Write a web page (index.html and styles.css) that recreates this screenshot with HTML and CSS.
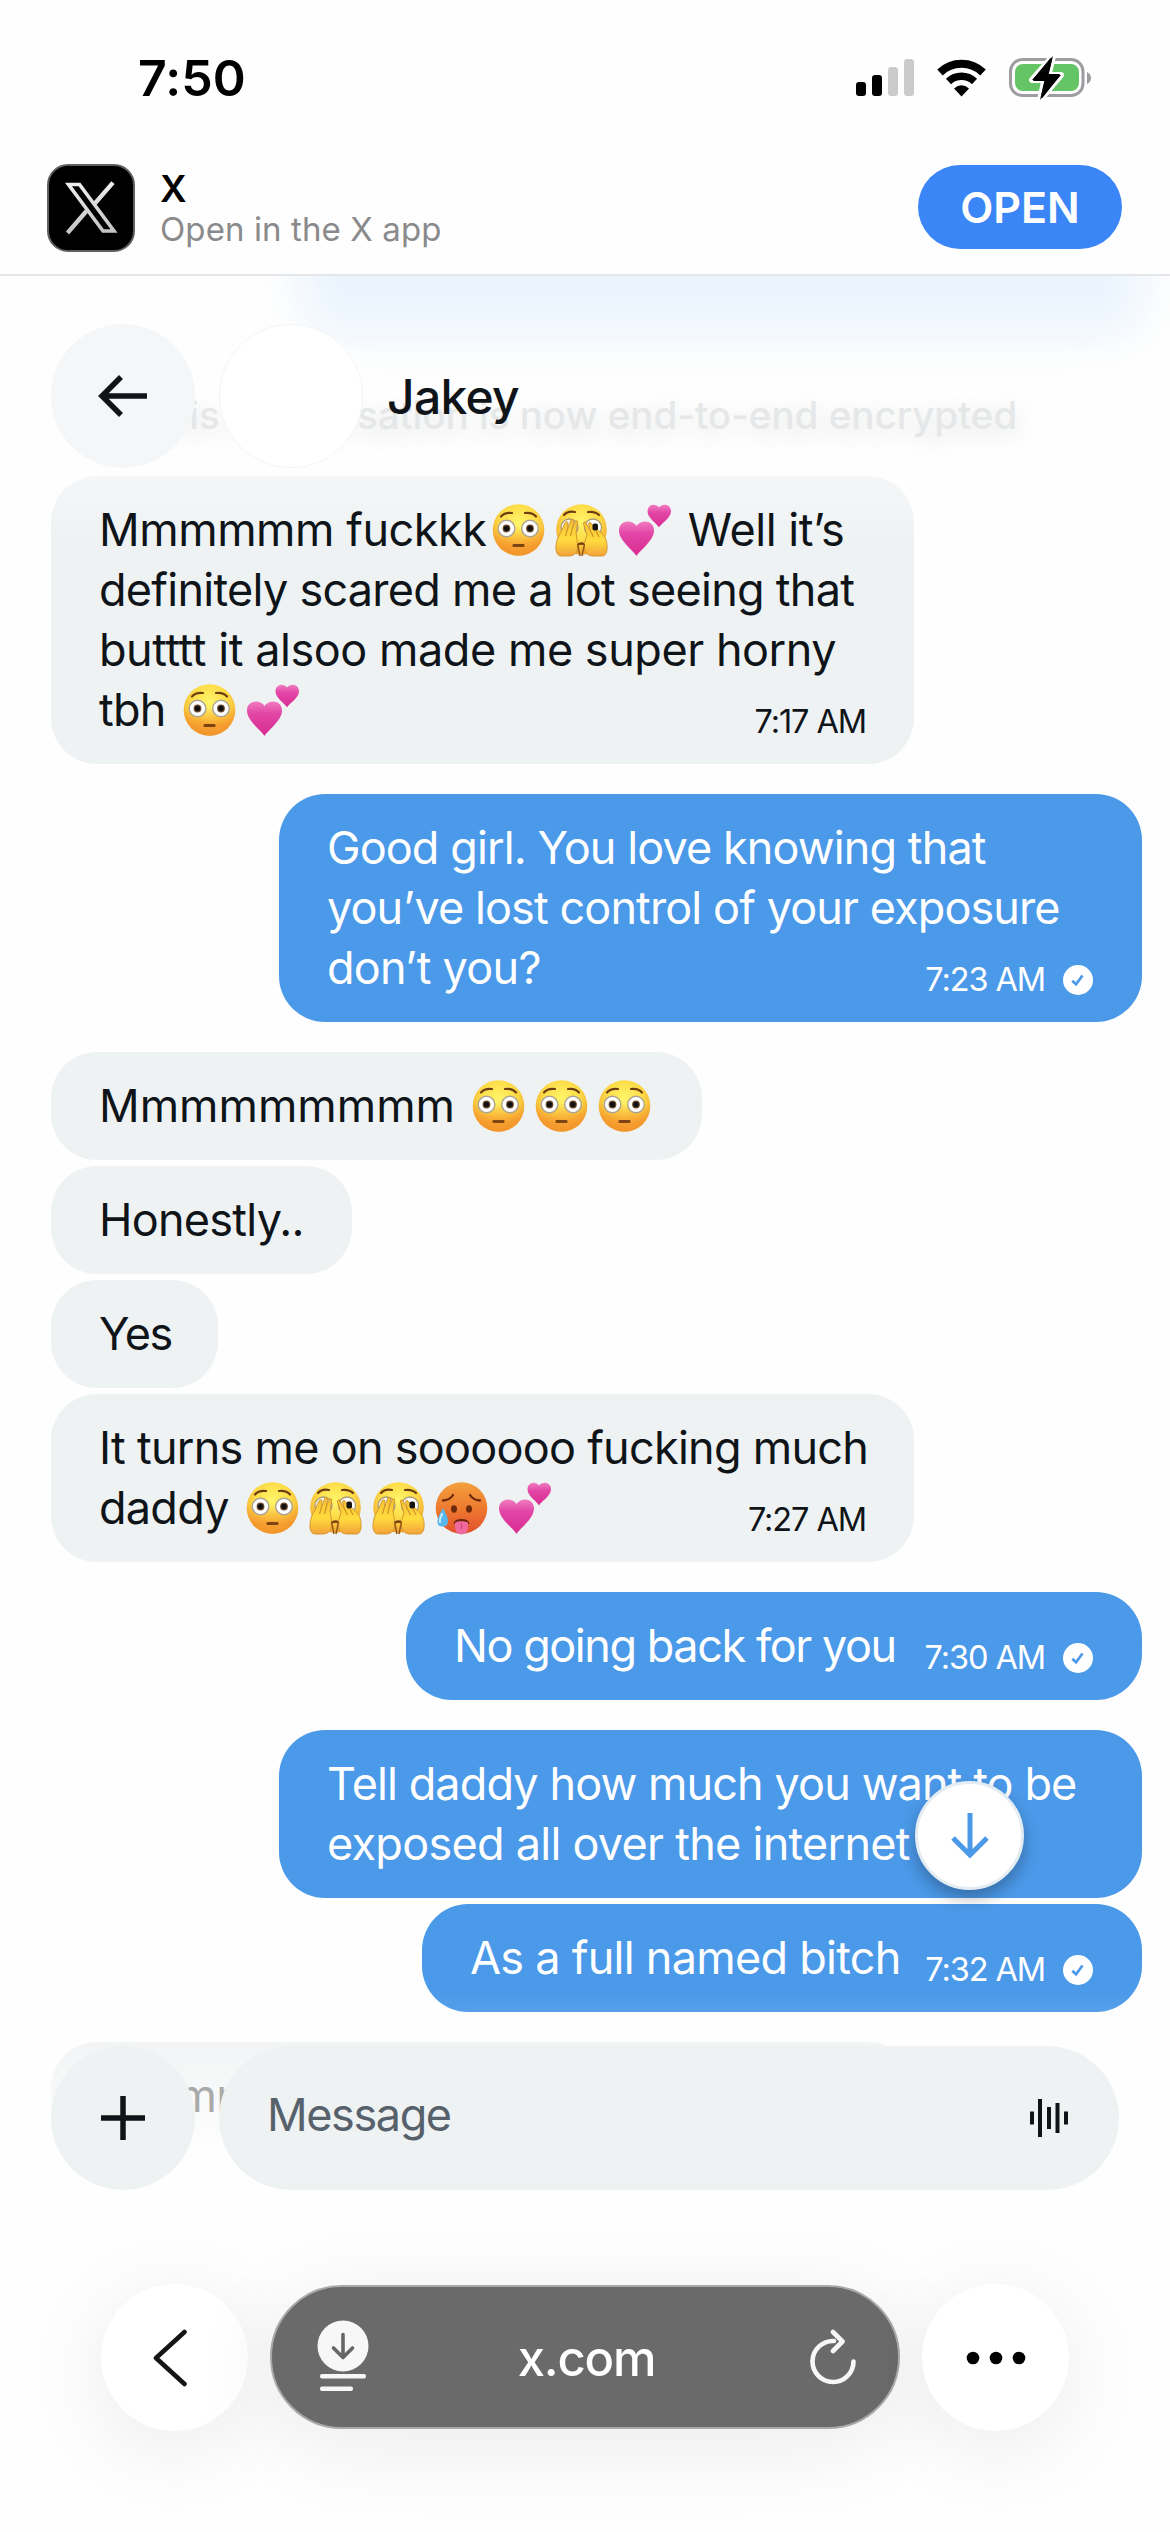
FILE: index.html
```
<!DOCTYPE html>
<html lang="en">
<head>
<meta charset="utf-8">
<title>x.com</title>
<link rel="stylesheet" href="styles.css">
</head>
<body>
<svg class="defs" aria-hidden="true">
  <defs>
    <radialGradient id="skin" cx=".5" cy=".35" r=".65"><stop offset="0" stop-color="#fff56a"/><stop offset=".55" stop-color="#fddb47"/><stop offset="1" stop-color="#f0a12c"/></radialGradient>
    <linearGradient id="flush" x1="0" y1="0" x2="0" y2="1"><stop offset=".45" stop-color="#f58a2a" stop-opacity="0"/><stop offset=".8" stop-color="#f58a2a" stop-opacity=".6"/></linearGradient>
    <linearGradient id="hand" x1="0" y1="0" x2="0" y2="1"><stop offset="0" stop-color="#f2bf35"/><stop offset=".55" stop-color="#ffdc3e"/><stop offset="1" stop-color="#f2a23a"/></linearGradient>
    <linearGradient id="heat" x1="0" y1="0" x2="0" y2="1"><stop offset="0" stop-color="#f3a13c"/><stop offset=".5" stop-color="#ee7a30"/><stop offset="1" stop-color="#e2502c"/></linearGradient>
    <linearGradient id="pink" x1="0" y1="0" x2="0" y2="1"><stop offset="0" stop-color="#f07cc0"/><stop offset=".35" stop-color="#e246a6"/><stop offset="1" stop-color="#d92b92"/></linearGradient>
    <linearGradient id="metal" x1="0" y1="0" x2="0" y2="1"><stop offset="0" stop-color="#ededed"/><stop offset="1" stop-color="#c4c4c4"/></linearGradient>
    <symbol id="flushed" viewBox="0 0 63 54">
      <circle cx="31.5" cy="27" r="25.8" fill="url(#skin)"/><circle cx="31.5" cy="27" r="25.8" fill="url(#flush)"/>
      <path d="M14 13.5q4-4.500 11-3.500M38 10q7-1 11 3.500" fill="none" stroke="#6b3d10" stroke-width="2.200" stroke-linecap="round"/>
      <circle cx="19.500" cy="25.500" r="8.300" fill="#fff" stroke="#aaa393" stroke-width="1.400"/><circle cx="43" cy="25.500" r="8.300" fill="#fff" stroke="#aaa393" stroke-width="1.400"/>
      <circle cx="19.500" cy="25.500" r="3.900" fill="#6b4a2c"/><circle cx="43" cy="25.500" r="3.900" fill="#6b4a2c"/><circle cx="19.500" cy="25.500" r="2.700" fill="#111"/><circle cx="43" cy="25.500" r="2.700" fill="#111"/>
      <rect x="25.500" y="41" width="12" height="3" rx="1.200" fill="#7d4313"/>
    </symbol>
    <symbol id="peek" viewBox="0 0 63 54">
      <circle cx="31.500" cy="26.500" r="25.300" fill="url(#skin)"/>
      <path d="M14 12q4-4.500 11-3M38 9q7-1 11 3" fill="none" stroke="#6b3d10" stroke-width="2.200" stroke-linecap="round"/>
      <circle cx="19.500" cy="24.500" r="8.500" fill="#f5f3e6" stroke="#a99b78" stroke-width="1.300"/><circle cx="43" cy="24.500" r="8.500" fill="#fff" stroke="#a99b78" stroke-width="1.300"/>
      <path d="M27 42q4.500-3 9 0" fill="none" stroke="#75400f" stroke-width="2.500"/>
      <path d="M6 47C5.500 39 8 34 11 29L15 20Q17 17 18 20L17.500 26L21 17Q23 15 23.700 18L22.500 25L25.500 18Q28 17 27.500 20L26 30L27.500 40Q29 52 20 53H11Q7 53 6 47Z" fill="url(#hand)" stroke="#d2922a" stroke-width=".9"/>
      <path d="M57 47C57.500 39 56 35 52.500 31L48 27Q46 25 45.500 27L41 20Q39 18 38.500 21L40 27L35.500 19Q33.500 18 33.500 21L37 32L34.500 40Q33 52 42 53H52Q56 53 57 47Z" fill="url(#hand)" stroke="#d2922a" stroke-width=".9"/>
      <rect x="42.500" y="20.500" width="5.500" height="7" rx="2" fill="#171310"/>
      <path d="M17.500 26L15.500 33M22.500 25L20.500 33M46 28L49 34M40 27L43.500 34" fill="none" stroke="#cf8f25" stroke-width="1.100"/>
      <path d="M27.500 41l2.500 12M34.500 41l-2.500 12" stroke="#96581a" stroke-width="1.500"/>
    </symbol>
    <symbol id="hot" viewBox="0 0 63 54">
      <circle cx="31.500" cy="27" r="25.800" fill="url(#heat)"/>
      <path d="M13 19.500Q20 19 23 14M40 14Q43 19 50 19.500" fill="none" stroke="#6e2b0c" stroke-width="2.300" stroke-linecap="round"/>
      <ellipse cx="24" cy="28" rx="3" ry="3.700" fill="#6e2b0c"/><ellipse cx="39" cy="28" rx="3" ry="3.700" fill="#6e2b0c"/>
      <path d="M23.500 43Q24 38 31.500 38T39.500 43Z" fill="#71270d"/>
      <path d="M25 41.500Q31.500 39 38 41.500V47Q37 53.500 31.500 53.500T25 47Z" fill="#ee6a9d"/><path d="M31.500 42v6" stroke="#d3447d" stroke-width="1.200"/>
      <path d="M13 27Q18 36 18 40Q18 45.500 12.500 45.500T7.500 40Q7.500 36 13 27Z" fill="#59b7ed"/><path d="M12 33Q9.500 38 10 41" fill="none" stroke="#c5ecff" stroke-width="2" stroke-linecap="round"/>
    </symbol>
    <symbol id="hearts" viewBox="0 0 63 54">
      <path d="M23.500 53C21 48 6 38 6 27.500C6 17 19.500 16 23.500 23C28 16 41 17 41 27.500C41 38 26 48 23.500 53Z" fill="url(#pink)"/>
      <path d="M46 24.500C44.500 21 34.500 15 34.500 8.500C34.500 1 43 0 46 4.500C49.500 0 58 1 58 8.500C58 15 47.500 21 46 24.500Z" fill="url(#pink)"/>
    </symbol>
    <symbol id="sent" viewBox="0 0 30 30"><circle cx="15" cy="15" r="15" fill="#fff"/><path d="M9.300 15.700l3.700 3.500 6.500-8.700" fill="none" stroke="#4b99e9" stroke-width="2.700"/></symbol>
  </defs>
</svg>

<header class="status">
  <span class="clock">7:50</span>
  <svg class="status-icons" width="240" height="44" viewBox="853 56 240 44">
    <rect x="856" y="82" width="10" height="14" rx="3"/><rect x="872" y="75" width="10" height="21" rx="3"/>
    <rect x="888" y="67" width="10" height="29" rx="3" fill="#cbcbcb"/><rect x="904" y="59" width="10" height="37" rx="3" fill="#cbcbcb"/>
    <path d="M940 72.500a31 31 0 0 1 43 0" fill="none" stroke="#000" stroke-width="8"/>
    <path d="M948.500 81.500a19 19 0 0 1 26 0" fill="none" stroke="#000" stroke-width="7.500"/>
    <path d="M954 88.500Q961.500 82 969 88.500L961.500 96.500Z"/>
    <rect x="1010.500" y="59.500" width="72.500" height="36" rx="12" fill="#fff" stroke="#9d9ca0" stroke-width="3"/>
    <rect x="1015" y="64" width="64" height="27" rx="8" fill="#65c466"/>
    <path d="M1087 72q4 2 4 6t-4 6z" fill="#9d9ca0"/>
    <path d="M1053 56L1032 80h12.500L1040 100L1061 75h-12.500Z" fill="#000" stroke="#fff" stroke-width="6" stroke-linejoin="round" paint-order="stroke"/>
    <path d="M1051 59L1034 80h12L1042 97L1059 75h-12Z" stroke="#000" stroke-width="2" stroke-linejoin="round"/>
  </svg>
</header>

<section class="app-banner">
  <svg class="app-icon" width="88" height="88" viewBox="0 0 88 88">
    <rect x="1" y="1" width="86" height="86" rx="20" stroke="#606060" stroke-width="2"/>
    <g fill="none" stroke="url(#metal)" stroke-width="3.600"><path d="M21.500 20.500H32.500L67 67H56Z"/><path d="M66 18.700L46.500 41M39.500 47L20.500 69" stroke-width="4.300"/></g>
  </svg>
  <div class="app-copy"><span class="app-name">X</span><span class="app-sub">Open in the X app</span></div>
  <span class="open">OPEN</span>
</section>

<main class="chat">
  <p class="notice">This conversation is now end-to-end encrypted</p>
  <div class="group in">
    <div class="bubble full"><p><span class="t1">Mmmmmm fuckkk</span><svg class="emoji"><use href="#flushed"/></svg><svg class="emoji"><use href="#peek"/></svg><svg class="emoji"><use href="#hearts"/></svg><span class="t1"> Well it’s</span><br>definitely scared me a lot seeing that<br><span class="t1">butttt it alsoo made me super horny</span><br>tbh <svg class="emoji"><use href="#flushed"/></svg><svg class="emoji"><use href="#hearts"/></svg></p><span class="meta">7:17 AM</span></div>
  </div>
  <div class="group out">
    <div class="bubble full"><p><span class="t2">Good girl. You love knowing that</span><br><span class="t2">you’ve lost control of your exposure</span><br>don’t you?</p><span class="meta">7:23 AM<svg class="sent"><use href="#sent"/></svg></span></div>
  </div>
  <div class="group in">
    <div class="bubble w-mmm"><p><span class="t0">Mmmmmmmmm</span> <svg class="emoji"><use href="#flushed"/></svg><svg class="emoji"><use href="#flushed"/></svg><svg class="emoji"><use href="#flushed"/></svg></p></div>
    <div class="bubble w-honestly"><p>Honestly..</p></div>
    <div class="bubble w-yes"><p><span class="t3">Yes</span></p></div>
    <div class="bubble full"><p>It turns me on soooooo fucking much<br>daddy <svg class="emoji"><use href="#flushed"/></svg><svg class="emoji"><use href="#peek"/></svg><svg class="emoji"><use href="#peek"/></svg><svg class="emoji"><use href="#hot"/></svg><svg class="emoji"><use href="#hearts"/></svg></p><span class="meta">7:27 AM</span></div>
  </div>
  <div class="group out">
    <div class="bubble w-going"><p><span class="t3">No going back for you</span></p><span class="meta">7:30 AM<svg class="sent"><use href="#sent"/></svg></span></div>
  </div>
  <div class="group out">
    <div class="bubble full"><p><span class="t2">Tell daddy how much you want to be</span><br>exposed all over the internet</p></div>
    <div class="bubble w-named"><p>As a full named bitch</p><span class="meta">7:32 AM<svg class="sent"><use href="#sent"/></svg></span></div>
  </div>
  <div class="group in">
    <div class="bubble full fading"><p>Mmmm</p></div>
  </div>

  <div class="chat-head">
    <span class="round back"><svg width="50" height="42" viewBox="0 0 50 42"><path d="M49 21H4M23 2L4 21L23 40" fill="none" stroke="#0f1419" stroke-width="5.500"/></svg></span>
    <span class="round avatar"></span>
    <span class="name">Jakey</span>
  </div>

  <span class="to-bottom"><svg width="40" height="46" viewBox="0 0 40 46"><path d="M20 0V42M3 25L20 42L37 25" fill="none" stroke="#4b99e9" stroke-width="5"/></svg></span>

  <div class="composer">
    <span class="round plus"><svg width="46" height="46" viewBox="0 0 46 46"><path d="M23 1V45M1 23H45" stroke="#0f1419" stroke-width="5.500"/></svg></span>
    <div class="field"><span class="hint">Message</span><svg width="40" height="40" viewBox="0 0 40 40"><path d="M3 13.500V26.500M11 1V39M20 9V31M28.500 5V35M37 13.500V26.500" stroke="#0f1419" stroke-width="4"/></svg></div>
  </div>
</main>

<footer class="toolbar">
  <span class="tool prev"><svg width="36" height="58" viewBox="0 0 36 58"><path d="M32.500 3L4 29L32.500 55" fill="none" stroke="#151515" stroke-width="4.600" stroke-linecap="round" stroke-linejoin="round"/></svg></span>
  <div class="address">
    <svg width="52" height="74" viewBox="0 0 52 74"><circle cx="26" cy="26" r="25.500" fill="#f7f7f7"/><path d="M26 14.500V36M16.500 28L26 37.500L35.500 28" fill="none" stroke="#666" stroke-width="3.600" stroke-linecap="round" stroke-linejoin="round"/><rect x="3" y="54" width="46" height="4.500" rx="2" fill="#f7f7f7"/><rect x="3" y="66.500" width="33" height="4.500" rx="2" fill="#f7f7f7"/></svg>
    <span class="url">x.com</span>
    <svg width="46" height="56" viewBox="0 0 46 56"><path d="M24 12A20.500 20.500 0 1 0 43.500 32.500" fill="none" stroke="#f7f7f7" stroke-width="4.600" stroke-linecap="round"/><path d="M23 3L32.500 12.500L23 22" fill="none" stroke="#f7f7f7" stroke-width="4.600" stroke-linecap="round" stroke-linejoin="round"/></svg>
  </div>
  <span class="tool"><svg width="60" height="14" viewBox="0 0 60 14"><circle cx="7" cy="7" r="6.300"/><circle cx="30" cy="7" r="6.300"/><circle cx="53" cy="7" r="6.300"/></svg></span>
</footer>
</body>
</html>
```
FILE: styles.css
```
* { box-sizing: border-box; margin: 0; }
body { width: 1170px; height: 2532px; overflow: hidden; background: #fefefe; font-family: Inter, "Liberation Sans", sans-serif; color: #0f1419; display: flex; flex-direction: column; }
.defs { position: absolute; width: 0; height: 0; }
svg { display: block; flex: none; }

.status { height: 156px; padding: 47px 77px 0 138px; display: flex; justify-content: space-between; align-items: flex-start; }
.clock { font-size: 50px; font-weight: 600; line-height: 62px; letter-spacing: 0.1px; color: #000; }
.status-icons { margin-top: 9px; }

.app-banner { height: 120px; padding: 8px 48px 0 47px; display: flex; align-items: flex-start; border-bottom: 2px solid #e4e6e9; }
.app-copy { margin-left: 25px; padding-top: 5px; display: flex; flex-direction: column; }
.app-name { font-size: 37px; line-height: 40px; font-weight: 600; color: #000; }
.app-sub { font-size: 33px; line-height: 40px; color: #8a8a8c; white-space: nowrap; letter-spacing: 0.1px; }
.open { margin-left: auto; margin-top: 1px; width: 204px; height: 84px; border-radius: 42px; background: #3b86f7; color: #fff; font-size: 43px; font-weight: 600; line-height: 84px; text-align: center; }

.chat { position: relative; height: 1974px; padding: 0 28px 0 51px; display: flex; flex-direction: column; gap: 30px; overflow: hidden; }
.chat::before { content: ""; position: absolute; left: 300px; top: -70px; width: 845px; height: 130px; border-radius: 40px; background: #ebf4fd; filter: blur(22px); }
.notice { height: 170px; flex: none; padding: 114px 0 0 90px; font-size: 38.5px; line-height: 50px; font-weight: 500; color: #e5e7e8; white-space: nowrap; text-shadow: 0 6px 26px #dcdedf; }
.group { display: flex; flex-direction: column; gap: 6px; align-items: flex-start; }
.group.out { align-items: flex-end; }
.bubble { display: grid; grid-template-columns: minmax(0, 1fr); border-radius: 46px; padding: 24px 48px; background: #eef2f3; }
.bubble p, .bubble .meta { grid-area: 1 / 1; }
.bubble p { font-size: 45px; line-height: 60px; white-space: nowrap; letter-spacing: -0.73px; }
.bubble .t0 { letter-spacing: 0; }
.bubble .t1 { letter-spacing: -0.45px; }
.bubble .t2 { letter-spacing: -0.9px; }
.bubble .t3 { letter-spacing: -1.45px; }
.out .bubble { background: #4b99e9; color: #fff; }
.full { width: 863px; }
.in:nth-child(2) .bubble { background: linear-gradient(#f5f6f7, #eef2f3 70px); }
.w-mmm { width: 651px; }
.w-honestly { width: 301px; }
.w-yes { width: 167px; }
.w-going { width: 736px; }
.out .w-named { width: 720px; background: linear-gradient(#4b99e9 80%, #559fea); }
.bubble.fading { height: 160px; background: linear-gradient(#f2f4f5, #fefefe 110px); color: #aaa; }
.emoji { display: inline-block; width: 63px; height: 54px; vertical-align: -11px; }
.meta { align-self: end; justify-self: end; display: flex; align-items: center; margin-bottom: -2px; font-size: 32.5px; line-height: 40px; letter-spacing: -1.1px; }
.sent { width: 30px; height: 30px; margin-left: 18px; margin-right: 1px; }

.round { width: 144px; height: 144px; border-radius: 50%; flex: none; display: flex; align-items: center; justify-content: center; }
.chat-head { position: absolute; left: 51px; top: 48px; display: flex; align-items: center; gap: 24px; }
.back { background: #f4f6f8; }
.avatar { background: #fff; border: 1px solid #f4f5f5; }
.name { font-size: 48px; font-weight: 500; letter-spacing: -0.7px; }
.to-bottom { position: absolute; left: 915px; top: 1505px; width: 109px; height: 109px; border-radius: 50%; background: #fff; border: 3px solid #e3ecf3; box-shadow: 0 8px 16px rgba(0,0,0,.28); display: flex; align-items: center; justify-content: center; }
.composer { position: absolute; left: 51px; top: 1770px; width: 1068px; display: flex; gap: 24px; }
.plus, .field { background: #eef2f3; }
.field { flex: 1; height: 144px; border-radius: 72px; padding: 0 50px 0 48px; display: flex; align-items: center; justify-content: space-between; }
.hint { font-size: 45px; letter-spacing: -1.4px; color: #56616c; margin-top: -8px; }

.toolbar { flex: 1; padding: 34px 101px 0 101px; display: flex; justify-content: space-between; align-items: flex-start; }
.tool { width: 147px; height: 147px; border-radius: 50%; background: #fff; display: flex; align-items: center; justify-content: center; box-shadow: 0 16px 90px rgba(0,0,0,.08); }
.prev { padding-right: 10px; }
.address { width: 630px; height: 144px; margin-top: 1px; border-radius: 72px; background: #6a6a6a; border: 2px solid #a9a9a9; padding: 0 42px 0 45px; display: flex; align-items: center; justify-content: space-between; color: #fff; box-shadow: 0 16px 90px rgba(0,0,0,.08); }
.url { font-size: 49px; font-weight: 500; letter-spacing: -1.2px; margin: 2px 6px 0 0; }
```
